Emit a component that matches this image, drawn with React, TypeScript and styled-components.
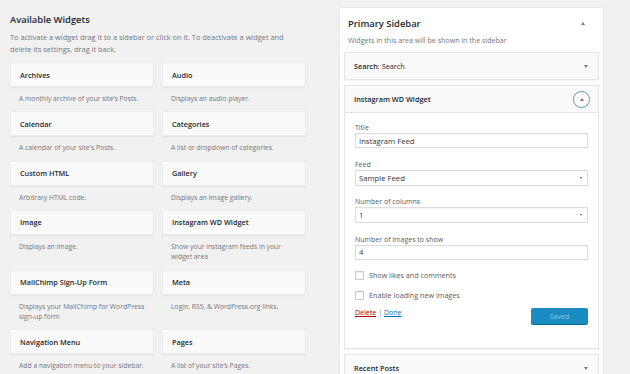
import React from "react";
import styled, { createGlobalStyle } from "styled-components";

const Global = createGlobalStyle`
	html, body {
		margin: 0;
		padding: 0;
		background: #f1f1f1;
	}
	body {
		font-family: "Open Sans", "Noto Sans", sans-serif;
		color: #23282d;
		width: 630px;
		height: 374px;
		overflow: hidden;
	}
`;

interface widgetItem {
	name: string;
	desc: string;
}

const widgets: widgetItem[] = [
	{ name: "Archives", desc: "A monthly archive of your site’s Posts." },
	{ name: "Audio", desc: "Displays an audio player." },
	{ name: "Calendar", desc: "A calendar of your site’s Posts." },
	{ name: "Categories", desc: "A list or dropdown of categories." },
	{ name: "Custom HTML", desc: "Arbitrary HTML code." },
	{ name: "Gallery", desc: "Displays an image gallery." },
	{ name: "Image", desc: "Displays an image." },
	{ name: "Instagram WD Widget", desc: "Show your instagram feeds in your widget area" },
	{ name: "MailChimp Sign-Up Form", desc: "Displays your MailChimp for WordPress sign-up form" },
	{ name: "Meta", desc: "Login, RSS, & WordPress.org links." },
	{ name: "Navigation Menu", desc: "Add a navigation menu to your sidebar." },
	{ name: "Pages", desc: "A list of your site’s Pages." },
];

export default function App() {
	return (
		<Page>
			<Global />
			<Available>
				<Heading>Available Widgets</Heading>
				<Intro>
					To activate a widget drag it to a sidebar or click on it. To deactivate a widget and
					delete its settings, drag it back.
				</Intro>
				<WidgetGrid>
					{widgets.map((w) => (
						<WidgetCell key={w.name}>
							<WidgetCard>{w.name}</WidgetCard>
							<WidgetDesc>{w.desc}</WidgetDesc>
						</WidgetCell>
					))}
				</WidgetGrid>
			</Available>
			<Sidebar>
				<SidebarHead>
					<SidebarTitle>Primary Sidebar</SidebarTitle>
					<Arrow up />
				</SidebarHead>
				<SidebarDesc>Widgets in this area will be shown in the sidebar</SidebarDesc>
				<Boxes>
					<Box>
						<BoxHead>
							<span>
								<b>Search</b>: Search
							</span>
							<Arrow />
						</BoxHead>
					</Box>
					<Box>
						<BoxHead open>
							<b>Instagram WD Widget</b>
							<Toggle>
								<Arrow up />
							</Toggle>
						</BoxHead>
						<BoxBody>
							<Field>
								<Label>Title</Label>
								<Input>Instagram Feed</Input>
							</Field>
							<Field>
								<Label>Feed</Label>
								<Select>
									Sample Feed
									<Caret />
								</Select>
							</Field>
							<Field>
								<Label>Number of columns</Label>
								<Select>
									1
									<Caret />
								</Select>
							</Field>
							<Field>
								<Label>Number of images to show</Label>
								<Input>4</Input>
							</Field>
							<Check>
								<CheckBox />
								Show likes and comments
							</Check>
							<Check>
								<CheckBox />
								Enable loading new images
							</Check>
							<Actions>
								<Links>
									<LinkText red>Delete</LinkText>
									<Sep>|</Sep>
									<LinkText>Done</LinkText>
								</Links>
								<SavedButton>Saved</SavedButton>
							</Actions>
						</BoxBody>
					</Box>
					<Box>
						<BoxHead>
							<b>Recent Posts</b>
							<Arrow />
						</BoxHead>
					</Box>
				</Boxes>
			</Sidebar>
		</Page>
	);
}

const Page = styled.div`
	display: flex;
	align-items: flex-start;
	gap: 33px;
	padding-left: 10px;
`;
const Available = styled.div`
	width: 296px;
	display: flex;
	flex-direction: column;
`;
const Heading = styled.div`
	font-size: 9.4px;
	font-weight: 600;
	color: #23282d;
	margin-top: 13px;
	line-height: 14px;
`;
const Intro = styled.div`
	font-size: 7.4px;
	line-height: 12px;
	color: #72777c;
	margin-top: 4px;
	max-width: 284px;
`;
const WidgetGrid = styled.div`
	display: grid;
	grid-template-columns: 144px 144px;
	column-gap: 8px;
	margin-top: 7px;
`;
const WidgetCell = styled.div`
	display: flex;
	flex-direction: column;
`;
const WidgetCard = styled.div`
	height: 25px;
	background: #fafafa;
	box-shadow: 0 1px 1px rgba(0, 0, 0, 0.05);
	border: 1px solid #ececec;
	box-sizing: border-box;
	display: flex;
	align-items: center;
	padding-left: 9px;
	font-size: 7.3px;
	font-weight: 600;
	color: #23282d;
`;
const WidgetDesc = styled.div`
	font-size: 6.8px;
	line-height: 10.5px;
	color: #72777c;
	padding: 7px 5px 6.8px 9px;
`;
const Sidebar = styled.div`
	width: 265px;
	height: 380px;
	margin-top: 7px;
	background: #fff;
	box-shadow: 0 1px 1px rgba(0, 0, 0, 0.04);
	border: 1px solid #e8e8e8;
	box-sizing: border-box;
	padding: 0 4px;
`;
const SidebarHead = styled.div`
	display: flex;
	align-items: center;
	justify-content: space-between;
	padding: 9px 14px 0 4px;
`;
const SidebarTitle = styled.div`
	font-size: 9.4px;
	font-weight: 600;
	line-height: 13px;
	color: #23282d;
`;
const SidebarDesc = styled.div`
	font-size: 7.1px;
	line-height: 10px;
	color: #72777c;
	padding: 5px 4px 0;
`;
const Boxes = styled.div`
	display: flex;
	flex-direction: column;
	gap: 5px;
	margin-top: 7px;
`;
const Box = styled.div`
	border: 1px solid #e5e5e5;
	background: #fafafa;
	box-shadow: 0 1px 1px rgba(0, 0, 0, 0.04);
`;
const BoxHead = styled.div<{ open?: boolean }>`
	height: 26px;
	display: flex;
	align-items: center;
	justify-content: space-between;
	padding: 0 10px 0 9px;
	font-size: 7.3px;
	color: #23282d;
	border-bottom: ${(p) => (p.open ? "1px solid #e5e5e5" : "none")};
	b {
		font-weight: 600;
	}
`;
const Arrow = styled.span<{ up?: boolean }>`
	width: 0;
	height: 0;
	border-left: 2.5px solid transparent;
	border-right: 2.5px solid transparent;
	border-top: ${(p) => (p.up ? "none" : "3px solid #72777c")};
	border-bottom: ${(p) => (p.up ? "3px solid #72777c" : "none")};
`;
const Toggle = styled.span`
	width: 15px;
	height: 15px;
	margin-right: -2px;
	border: 1px solid #6f9fb2;
	border-radius: 50%;
	display: flex;
	align-items: center;
	justify-content: center;
	box-shadow: 0 0 1px rgba(30, 140, 190, 0.5);
`;
const BoxBody = styled.div`
	background: #fff;
	padding: 10px 10px 24px;
	display: flex;
	flex-direction: column;
`;
const Field = styled.div`
	display: flex;
	flex-direction: column;
	margin-bottom: 11.5px;
`;
const Label = styled.div`
	font-size: 7px;
	line-height: 10px;
	color: #555d66;
`;
const Input = styled.div`
	height: 15px;
	border: 1px solid #ddd;
	box-sizing: border-box;
	box-shadow: inset 0 1px 2px rgba(0, 0, 0, 0.04);
	display: flex;
	align-items: center;
	padding-left: 3px;
	font-size: 7.7px;
	color: #32373c;
`;
const Select = styled(Input)`
	height: 16px;
	justify-content: space-between;
	padding-right: 5px;
`;
const Caret = styled.span`
	width: 0;
	height: 0;
	border-left: 1.6px solid transparent;
	border-right: 1.6px solid transparent;
	border-top: 2.5px solid #555;
`;
const Check = styled.div`
	display: flex;
	align-items: center;
	gap: 5px;
	font-size: 7.2px;
	color: #555d66;
	height: 10px;
	margin: -1px 0 11px;
`;
const CheckBox = styled.span`
	width: 9px;
	height: 9px;
	border: 1px solid #c9cdd0;
	box-sizing: border-box;
	box-shadow: inset 0 1px 2px rgba(0, 0, 0, 0.08);
	background: #fff;
`;
const Actions = styled.div`
	display: flex;
	justify-content: space-between;
	align-items: flex-start;
	margin-top: -3px;
`;
const Links = styled.div`
	display: flex;
	gap: 2px;
	font-size: 7px;
	line-height: 10px;
`;
const LinkText = styled.span<{ red?: boolean }>`
	color: ${(p) => (p.red ? "#a00" : "#0073aa")};
	text-decoration: underline;
`;
const Sep = styled.span`
	color: #72777c;
`;
const SavedButton = styled.div`
	width: 57px;
	height: 16px;
	background: #1a8cc2;
	border-radius: 2px;
	box-shadow: 0 1px 0 #0d6d99;
	color: #84c8e8;
	font-size: 7px;
	display: flex;
	align-items: center;
	justify-content: center;
`;
